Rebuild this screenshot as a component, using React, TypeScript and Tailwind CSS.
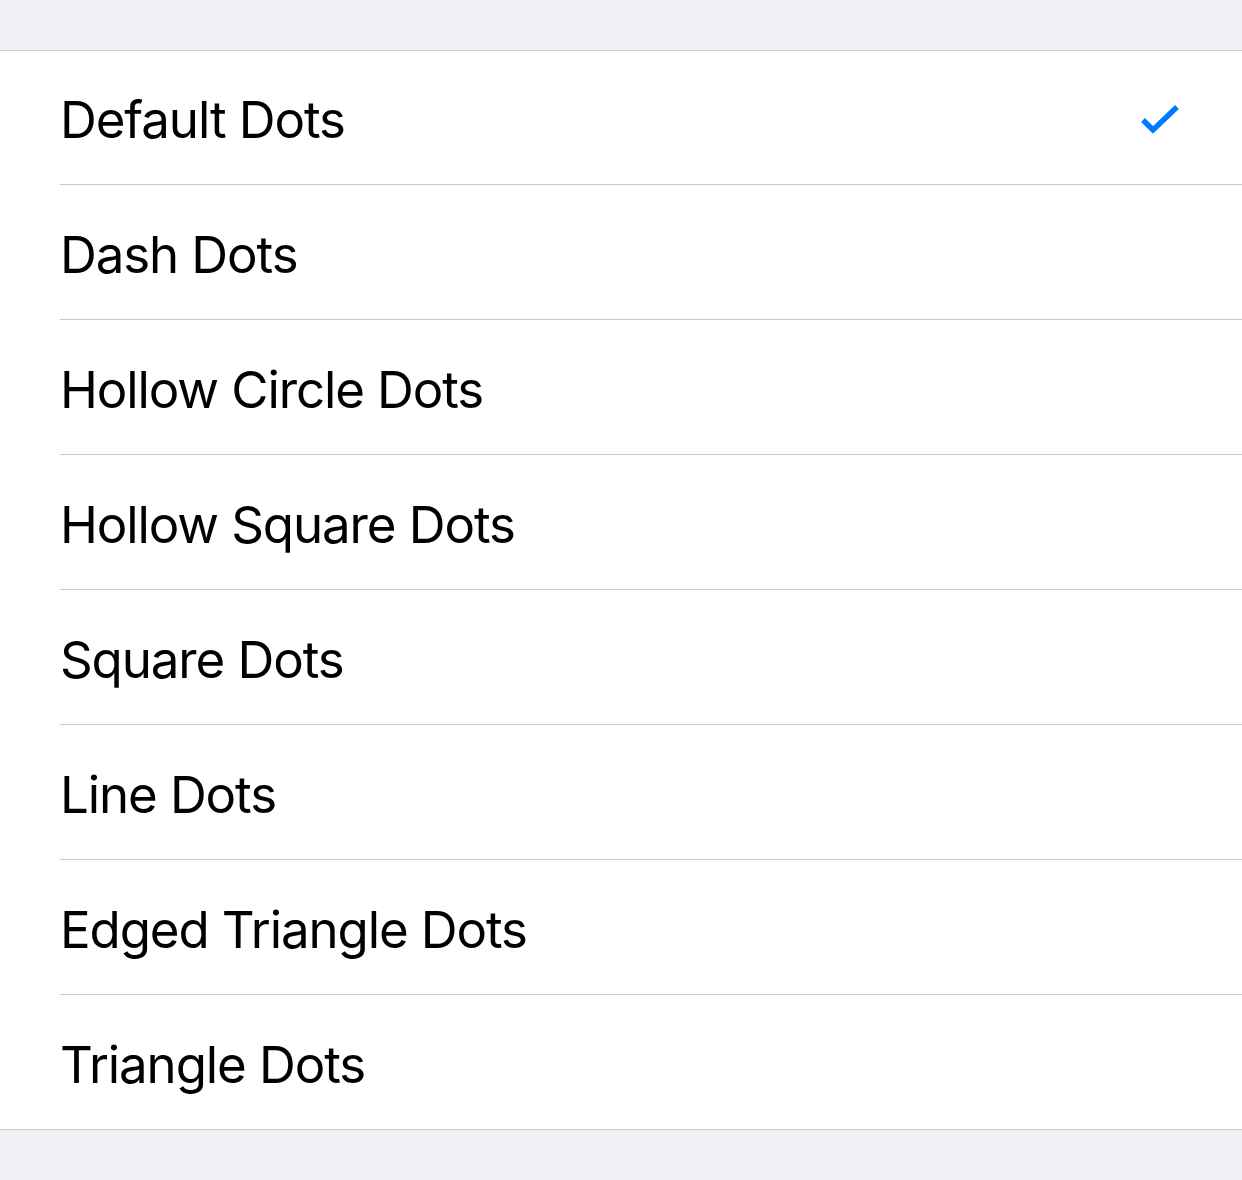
const options = [
  'Default Dots',
  'Dash Dots',
  'Hollow Circle Dots',
  'Hollow Square Dots',
  'Square Dots',
  'Line Dots',
  'Edged Triangle Dots',
  'Triangle Dots',
];

export default function App() {
  const selected = 'Default Dots';

  return (
    <div className="min-h-[1180px] bg-[#efeff4]" style={{ fontFamily: 'Inter, "Noto Sans", sans-serif' }}>
      <div className="h-[50px]" />
      <ul className="bg-white border-y border-[#c8c7cc]">
        {options.map((name, i) => {
          const last = i === options.length - 1;
          return (
            <li key={name} className="pl-[60px]">
              <div
                className={`flex items-center pr-[62px] ${
                  last ? 'h-[134px]' : i === 0 ? 'h-[134px] border-b border-[#c8c7cc]' : 'h-[135px] border-b border-[#c8c7cc]'
                }`}
              >
                <span className="flex-1 pt-[4px] text-[51px] leading-none text-black tracking-[-1.1px]">{name}</span>
                {name === selected && (
                  <svg width="40" height="32" viewBox="0 0 40 32" className="mt-[2px]">
                    <path d="M3 17 L13 27 L37 4" fill="none" stroke="#007aff" strokeWidth="5.5" />
                  </svg>
                )}
              </div>
            </li>
          );
        })}
      </ul>
    </div>
  );
}
